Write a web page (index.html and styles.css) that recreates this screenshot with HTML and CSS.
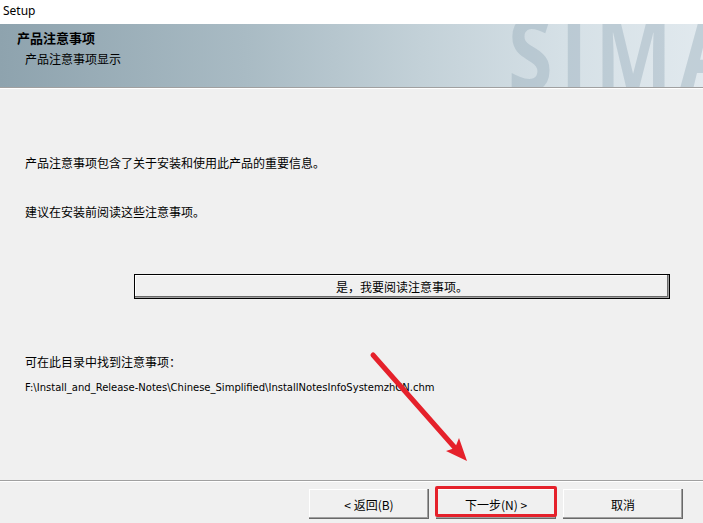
FILE: index.html
```html
<!DOCTYPE html>
<html lang="zh-CN">
<head>
<meta charset="utf-8">
<title>Setup</title>
<link rel="stylesheet" href="styles.css">
</head>
<body>
<div class="window">
  <div class="titlebar">Setup</div>
  <div class="header">
    <div class="header-title">产品注意事项</div>
    <div class="header-sub">产品注意事项显示</div>
    <div class="watermark" aria-hidden="true">SIMA</div>
  </div>
  <div class="sep"></div>
  <div class="content">
    <p class="line line1">产品注意事项包含了关于安装和使用此产品的重要信息。</p>
    <p class="line line2">建议在安装前阅读这些注意事项。</p>
    <div class="read-row"><button class="read-btn">是，我要阅读注意事项。</button></div>
    <p class="line line3">可在此目录中找到注意事项：</p>
    <p class="path">F:\Install_and_Release-Notes\Chinese_Simplified\InstallNotesInfoSystemzhCN.chm</p>
  </div>
  <div class="sep"></div>
  <div class="buttons">
    <button class="btn">&lt; 返回(B)</button>
    <div class="next-wrap">
      <button class="btn">下一步(N) &gt;</button>
      <div class="highlight"></div>
    </div>
    <button class="btn">取消</button>
  </div>
  <svg class="arrow" width="703" height="523" viewBox="0 0 703 523">
    <line x1="373" y1="355" x2="456" y2="449" stroke="#e5212b" stroke-width="5" stroke-linecap="round"/>
    <polygon points="467,461 446,451 455,448 459,438" fill="#e5212b"/>
  </svg>
</div>
</body>
</html>
```
FILE: styles.css
```css
* { box-sizing: border-box; }
html, body { margin: 0; padding: 0; }
body {
  width: 703px;
  height: 523px;
  overflow: hidden;
  background: #f0f0f0;
  font-family: "Noto Sans CJK SC", "Noto Sans", sans-serif;
  font-size: 12px;
  color: #000;
}
.window {
  position: relative;
  width: 703px;
  height: 523px;
  display: flex;
  flex-direction: column;
}
.titlebar {
  height: 24px;
  background: #fff;
  padding: 3px 0 0 3px;
  font-family: "Noto Sans", "Noto Sans CJK SC", sans-serif;
  font-size: 12px;
  line-height: 16px;
}
.header {
  position: relative;
  height: 63px;
  overflow: hidden;
  background: linear-gradient(90deg, #8ea3ae 0%, #a9bbc4 35%, #c3d1d8 60%, #d5e0e6 80%, #e1e9ee 100%);
  padding: 6px 0 0 17px;
}
.header-title {
  font-weight: bold;
  font-size: 13px;
  line-height: 16px;
  position: relative;
  z-index: 1;
}
.header-sub {
  margin: 5px 0 0 8px;
  font-size: 12px;
  line-height: 16px;
  position: relative;
  z-index: 1;
}
.watermark {
  position: absolute;
  left: 508px;
  top: -25px;
  font-family: "Open Sans", "Liberation Sans", sans-serif;
  font-weight: 700;
  font-size: 104px;
  line-height: 104px;
  letter-spacing: 10px;
  white-space: nowrap;
  transform: scaleX(0.78);
  transform-origin: left top;
  color: rgba(150, 172, 186, 0.42);
}
.sep {
  height: 2px;
  border-top: 1px solid #a0a0a0;
  border-bottom: 1px solid #ffffff;
}
.content {
  flex: 1;
  padding: 0 0 0 25px;
}
.line {
  margin: 0;
  line-height: 16px;
}
.line1 { margin-top: 66px; }
.line2 { margin-top: 33px; }
.read-row {
  margin-top: 54px;
  padding-left: 109px;
}
.read-btn {
  display: block;
  width: 536px;
  height: 25px;
  margin: 0;
  padding: 0;
  font-family: inherit;
  font-size: 12px;
  background: #f0f0f0;
  border: 1px solid #000;
  box-shadow: inset -1px -1px 0 #a0a0a0, inset -2px -2px 0 #696969, inset 1px 1px 0 #ffffff;
  text-align: center;
}
.line3 { margin-top: 55px; }
.path {
  margin: 11px 0 0 0;
  font-family: "DejaVu Sans", "Liberation Sans", sans-serif;
  font-size: 10px;
  line-height: 14px;
  letter-spacing: 0;
}
.buttons {
  height: 41px;
  display: flex;
  justify-content: flex-end;
  align-items: flex-start;
  gap: 7px;
  padding: 7px 20px 0 0;
}
.btn {
  width: 120px;
  height: 30px;
  margin: 0;
  padding: 0;
  font-family: inherit;
  font-size: 12px;
  background: #f0f0f0;
  border: none;
  box-shadow: inset -1px -1px 0 #696969, inset -2px -2px 0 #a0a0a0, inset 1px 1px 0 #ffffff;
  text-align: center;
  color: #000;
}
.next-wrap {
  position: relative;
  width: 120px;
  height: 30px;
}
.highlight {
  position: absolute;
  left: -1px;
  top: -3px;
  width: 122px;
  height: 31px;
  border: 3px solid #e5212b;
  border-radius: 2px;
}
.arrow {
  position: absolute;
  left: 0;
  top: 0;
  pointer-events: none;
}
```
